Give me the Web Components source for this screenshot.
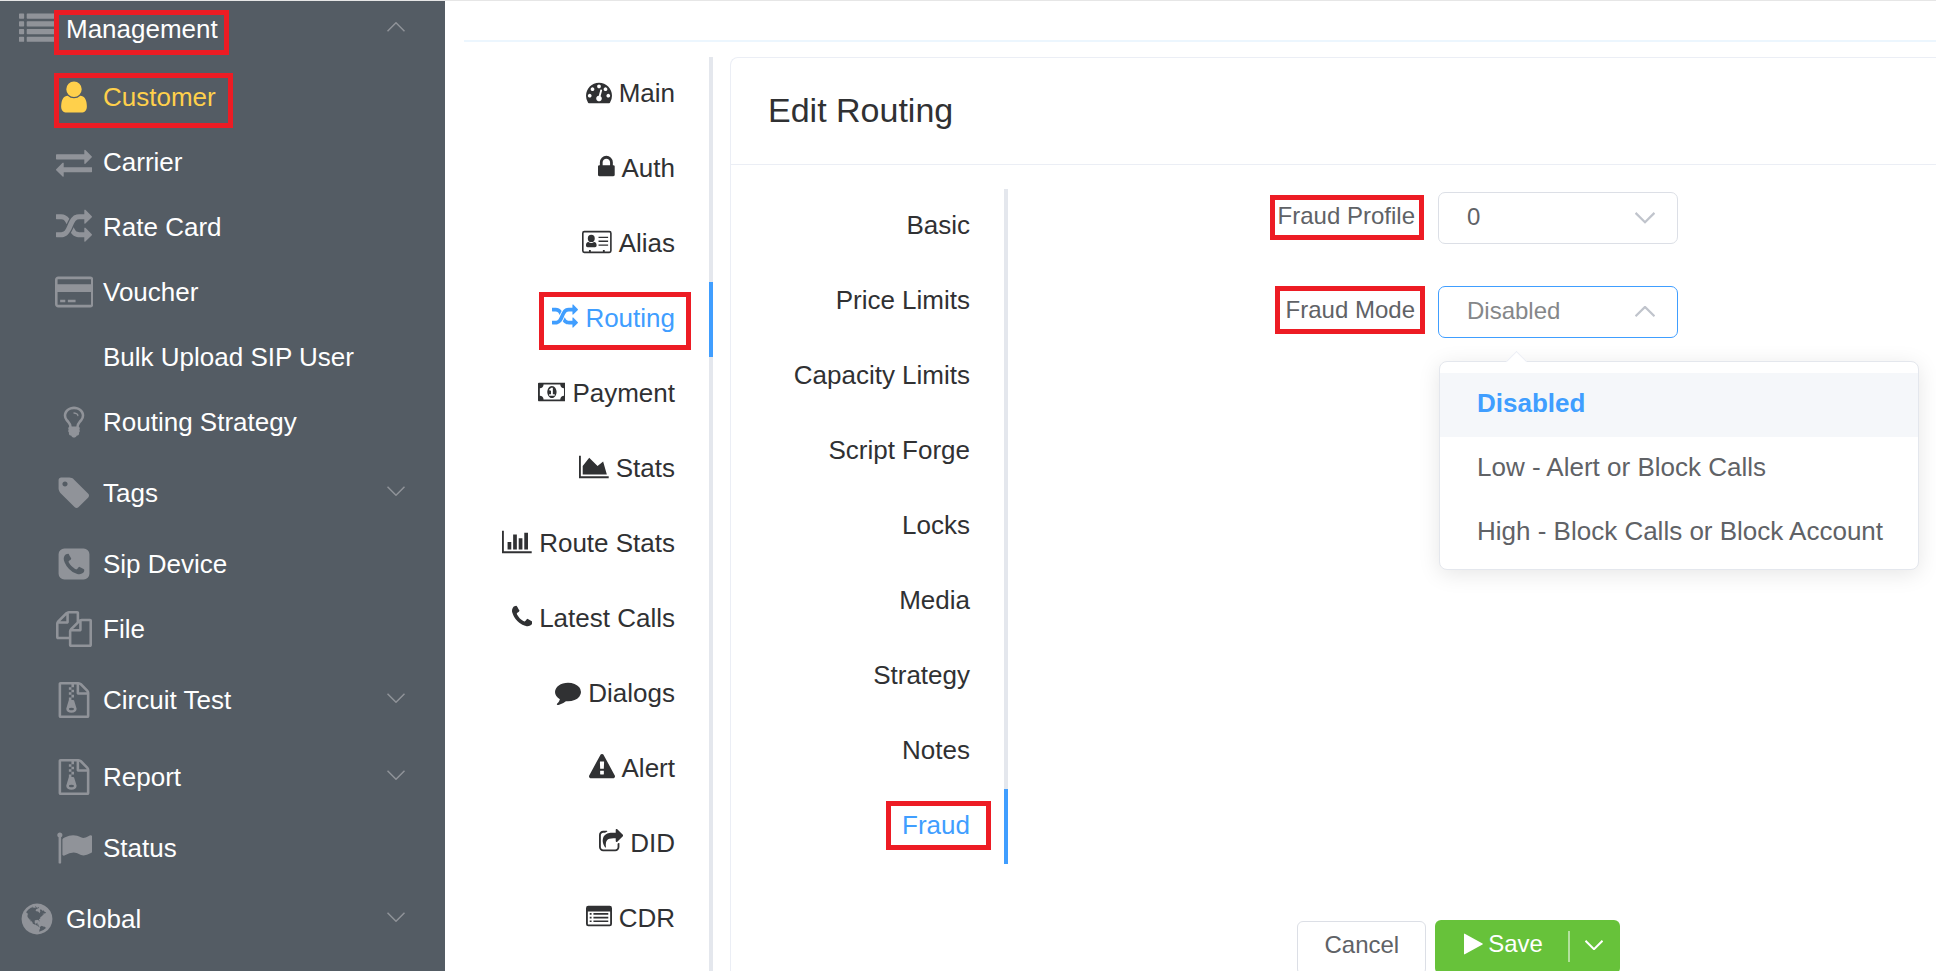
<!DOCTYPE html>
<html lang="en">
<head>
<meta charset="utf-8">
<title>Edit Routing</title>
<style>
  body {
    margin: 0;
    font-family: "Liberation Sans", Arial, sans-serif;
    font-size: 26px;
    color: #303133;
    background: #fff;
    --primary: #409eff;
    --mark: #ed1c24;
    --rule: #e4e7ed;
  }
</style>
</head>
<body>
<app-shell>
  <side-menu slot="side">
    <menu-item level="top" icon="list" arrow="up" mark="management">Management</menu-item>
    <menu-item icon="user" active mark="customer">Customer</menu-item>
    <menu-item icon="exchange">Carrier</menu-item>
    <menu-item icon="random">Rate Card</menu-item>
    <menu-item icon="card">Voucher</menu-item>
    <menu-item>Bulk Upload SIP User</menu-item>
    <menu-item icon="bulb">Routing Strategy</menu-item>
    <menu-item icon="tag" arrow="down">Tags</menu-item>
    <menu-item icon="phone-square">Sip Device</menu-item>
    <menu-item icon="files">File</menu-item>
    <menu-item icon="archive" arrow="down">Circuit Test</menu-item>
    <menu-item icon="archive" arrow="down">Report</menu-item>
    <menu-item icon="flag">Status</menu-item>
    <menu-item level="top" icon="globe" arrow="down">Global</menu-item>
  </side-menu>
  <tab-list slot="tabs" label="Customer">
    <tab-item icon="gauge">Main</tab-item>
    <tab-item icon="lock">Auth</tab-item>
    <tab-item icon="id-card">Alias</tab-item>
    <tab-item icon="random" active mark="wide">Routing</tab-item>
    <tab-item icon="money">Payment</tab-item>
    <tab-item icon="area">Stats</tab-item>
    <tab-item icon="bars">Route Stats</tab-item>
    <tab-item icon="phone">Latest Calls</tab-item>
    <tab-item icon="comment">Dialogs</tab-item>
    <tab-item icon="warning">Alert</tab-item>
    <tab-item icon="share">DID</tab-item>
    <tab-item icon="list-alt">CDR</tab-item>
  </tab-list>
  <edit-card heading="Edit Routing">
    <tab-list slot="tabs" label="Routing">
      <tab-item>Basic</tab-item>
      <tab-item>Price Limits</tab-item>
      <tab-item>Capacity Limits</tab-item>
      <tab-item>Script Forge</tab-item>
      <tab-item>Locks</tab-item>
      <tab-item>Media</tab-item>
      <tab-item>Strategy</tab-item>
      <tab-item>Notes</tab-item>
      <tab-item active mark="narrow">Fraud</tab-item>
    </tab-list>
    <select-field label="Fraud Profile" options="0"></select-field>
    <select-field label="Fraud Mode" open
      options="Disabled|Low - Alert or Block Calls|High - Block Calls or Block Account"></select-field>
    <form-actions slot="footer"></form-actions>
  </edit-card>
</app-shell>

<script>
const ICONS = {
  list: ['0 0 1792 1792', 'M32 128h192q32 0 32 32v192q0 32-32 32h-192q-32 0-32-32v-192q0-32 32-32zM32 512h192q32 0 32 32v192q0 32-32 32h-192q-32 0-32-32v-192q0-32 32-32zM32 896h192q32 0 32 32v192q0 32-32 32h-192q-32 0-32-32v-192q0-32 32-32zM32 1280h192q32 0 32 32v192q0 32-32 32h-192q-32 0-32-32v-192q0-32 32-32zM416 128h1344q32 0 32 32v192q0 32-32 32h-1344q-32 0-32-32v-192q0-32 32-32zM416 512h1344q32 0 32 32v192q0 32-32 32h-1344q-32 0-32-32v-192q0-32 32-32zM416 896h1344q32 0 32 32v192q0 32-32 32h-1344q-32 0-32-32v-192q0-32 32-32zM416 1280h1344q32 0 32 32v192q0 32-32 32h-1344q-32 0-32-32v-192q0-32 32-32z'],
  user: ['0 0 1792 1792', 'M1536 1399q0 109-62.5 187t-150.5 78h-854q-88 0-150.5-78t-62.5-187q0-85 8.5-160.5t31.5-152 58.5-131 94-89 134.5-34.5q131 128 313 128t313-128q76 0 134.5 34.5t94 89 58.5 131 31.5 152 8.5 160.5zm-256-887q0 159-112.5 271.5t-271.5 112.5-271.5-112.5-112.5-271.5 112.5-271.5 271.5-112.5 271.5 112.5 112.5 271.5z'],
  exchange: ['0 0 1792 1792', 'M1792 1184v192q0 13-9.5 22.5t-22.5 9.5h-1376v192q0 13-9.5 22.5t-22.5 9.5q-12 0-24-10l-319-320q-9-9-9-22 0-14 9-23l320-320q9-9 23-9 13 0 22.5 9.5t9.5 22.5v192h1376q13 0 22.5 9.5t9.5 22.5zm0-544q0 14-9 23l-320 320q-9 9-23 9-13 0-22.5-9.5t-9.5-22.5v-192h-1376q-13 0-22.5-9.5t-9.5-22.5v-192q0-13 9.5-22.5t22.5-9.5h1376v-192q0-14 9-23t23-9q12 0 24 10l319 319q9 9 9 23z'],
  random: ['0 0 1792 1792', 'M666 481q-60 92-137 273-22-45-37-72.5t-40.5-63.5-51-56.5-63-35-81.5-14.5h-224q-14 0-23-9t-9-23v-192q0-14 9-23t23-9h224q250 0 410 225zm1126 799q0 14-9 23l-320 320q-9 9-23 9-13 0-22.5-9.5t-9.5-22.5v-192q-32 0-85 .5t-81 1-73-1-71-5-64-10.5-63-18.5-58-28.5-59-40-55-53.5-56-69.5q59-93 136-273 22 45 37 72.5t40.5 63.5 51 56.5 63 35 81.5 14.5h256v-192q0-14 9-23t23-9q12 0 24 10l319 319q9 9 9 23zm0-896q0 14-9 23l-320 320q-9 9-23 9-13 0-22.5-9.5t-9.5-22.5v-192h-256q-48 0-87 15t-69 45-51 61.5-45 77.5q-32 62-78 171-29 66-49.5 111t-54 105-64 100-74 83-90 68.5-106.5 42-128 16.5h-224q-14 0-23-9t-9-23v-192q0-14 9-23t23-9h224q48 0 87-15t69-45 51-61.5 45-77.5q32-62 78-171 29-66 49.5-111t54-105 64-100 74-83 90-68.5 106.5-42 128-16.5h256v-192q0-14 9-23t23-9q12 0 24 10l319 319q9 9 9 23z'],
  card: ['0 0 1920 1792', 'M1760 128q66 0 113 47t47 113v1216q0 66-47 113t-113 47h-1600q-66 0-113-47t-47-113v-1216q0-66 47-113t113-47h1600zm-1600 128q-13 0-22.5 9.5t-9.5 22.5v224h1664v-224q0-13-9.5-22.5t-22.5-9.5h-1600zm1600 1280q13 0 22.5-9.5t9.5-22.5v-608h-1664v608q0 13 9.5 22.5t22.5 9.5h1600zm-1504-128v-128h256v128h-256zm384 0v-128h384v128h-384z'],
  bulb: ['0 0 1792 1792', 'M1120 576q0 13-9.5 22.5t-22.5 9.5-22.5-9.5-9.5-22.5q0-46-54-71t-106-25q-13 0-22.5-9.5t-9.5-22.5 9.5-22.5 22.5-9.5q50 0 99.5 16t87 54 37.5 90zm160 0q0-72-34.5-134t-90-101.5-123-62-136.5-22.5-136.5 22.5-123 62-90 101.5-34.5 134q0 101 68 180 10 11 30.5 33t30.5 33q128 153 141 298h228q13-145 141-298 10-11 30.5-33t30.5-33q68-79 68-180zm128 0q0 155-103 268-45 49-74.5 87t-59.5 95.5-34 107.5q47 28 47 82 0 37-25 64 25 27 25 64 0 52-45 81 13 23 13 47 0 46-31.5 71t-77.5 25q-20 44-60 70t-87 26-87-26-60-70q-46 0-77.5-25t-31.5-71q0-24 13-47-45-29-45-81 0-37 25-64-25-27-25-64 0-54 47-82-4-50-34-107.5t-59.5-95.5-74.5-87q-103-113-103-268 0-99 44.5-184.5t117-142 164-89 186.5-32.5 186.5 32.5 164 89 117 142 44.5 184.5z'],
  tag: ['0 0 1792 1792', 'M576 448q0-53-37.5-90.5t-90.5-37.5-90.5 37.5-37.5 90.5 37.5 90.5 90.5 37.5 90.5-37.5 37.5-90.5zm1067 576q0 53-37 90l-491 492q-39 37-91 37-53 0-90-37l-715-716q-38-37-64.5-101t-26.5-117v-416q0-52 38-90t90-38h416q53 0 117 26.5t102 64.5l715 714q37 39 37 91z'],
  'phone-square': ['0 0 1792 1792', 'M1408 1193q0-11-2-16t-18-16.5-40.5-25-47.5-26.5-45.5-25-28.5-15q-5-3-19-13t-25-15-21-5q-15 0-36.5 20.5t-39.5 45-38.5 45-33.5 20.5q-7 0-16.5-3.5t-15.5-6.5-17-9.5-14-8.5q-99-55-170-126.5t-127-170.5q-2-3-8.5-14t-9.5-17-6.5-15.5-3.5-16.5q0-13 20.5-33.5t45-38.5 45-39.5 20.5-36.5q0-10-5-21t-15-25-13-19q-3-6-15-28.5t-25-45.5-26.5-47.5-25-40.5-16.5-18-16-2q-48 0-101 22-46 21-80 94.5t-34 130.5q0 16 2.5 34t5 30.5 9 33 10 29.5 12.5 33 11 30q60 164 216.5 320.5t320.5 216.5q6 2 30 11t33 12.5 29.5 10 33 9 30.5 5 34 2.5q57 0 130.5-34t94.5-80q22-53 22-101zm256-777v960q0 119-84.5 203.5t-203.5 84.5h-960q-119 0-203.5-84.5t-84.5-203.5v-960q0-119 84.5-203.5t203.5-84.5h960q119 0 203.5 84.5t84.5 203.5z'],
  files: ['0 0 1792 1792', 'M1696 384q40 0 68 28t28 68v1216q0 40-28 68t-68 28h-960q-40 0-68-28t-28-68v-288h-544q-40 0-68-28t-28-68v-672q0-40 20-88t48-76l408-408q28-28 76-48t88-20h416q40 0 68 28t28 68v328q68-40 128-40h416zm-544 213l-299 299h299v-299zm-640-384l-299 299h299v-299zm196 647l316-316v-416h-384v416q0 40-28 68t-68 28h-416v640h512v-256q0-40 20-88t48-76zm956 804v-1152h-384v416q0 40-28 68t-68 28h-416v640h896z'],
  archive: ['0 0 1792 1792', 'M768 384v-128h-128v128h128zm128 128v-128h-128v128h128zm-128 128v-128h-128v128h128zm128 128v-128h-128v128h128zm700-388q28 28 48 76t20 88v1152q0 40-28 68t-68 28h-1344q-40 0-68-28t-28-68v-1600q0-40 28-68t68-28h896q40 0 88 20t76 48zm-444-244v376h376q-10-29-22-41l-313-313q-12-12-41-22zm384 1528v-1024h-416q-40 0-68-28t-28-68v-416h-128v128h-128v-128h-512v1536h1280zm-627-721l107 349q8 27 8 52 0 83-72.5 137.5t-183.5 54.5-183.5-54.5-72.5-137.5q0-25 8-52 21-63 120-396v-128h128v128h79q22 0 39 13t23 34zm-141 465q53 0 90.5-19t37.5-45-37.5-45-90.5-19-90.5 19-37.5 45 37.5 45 90.5 19z'],
  flag: ['0 0 1792 1792', 'M320 256q0 72-64 110v1266q0 13-9.5 22.5t-22.5 9.5h-64q-13 0-22.5-9.5t-9.5-22.5v-1266q-64-38-64-110 0-53 37.5-90.5t90.5-37.5 90.5 37.5 37.5 90.5zm1472 64v763q0 25-12.5 38.5t-39.5 27.5q-215 116-369 116-61 0-123.5-22t-108.5-48-115.5-48-142.5-22q-192 0-464 146-17 9-33 9-26 0-45-19t-19-45v-742q0-32 31-55 21-14 79-43 236-120 421-120 107 0 200 29t219 88q38 19 88 19 54 0 117.5-21t110-47 88-47 54.5-21q26 0 45 19t19 45z'],
  globe: ['0 0 1792 1792', 'M896 128q209 0 385.5 103t279.5 279.5 103 385.5-103 385.5-279.5 279.5-385.5 103-385.5-103-279.5-279.5-103-385.5 103-385.5 279.5-279.5 385.5-103zm274 521q-2 1-9.5 9.5t-13.5 9.5q2 0 4.5-5t5-11 3.5-7q6-7 22-15 14-6 52-12 34-8 51 11-2-2 9.5-13t14.5-12q3-2 15-4.5t15-7.5l2-22q-12 1-17.5-7t-6.5-21q0 2-6 8 0-7-4.5-8t-11.5 1-9 1q-10-3-15-7.5t-8-16.5-4-15q-2-5-9.5-11t-9.5-10q-1-2-2.5-5.5t-3-6.5-4-5.5-5.5-2.5-7 5-7.5 10-4.5 5q-3-2-6-1.5t-4.5 1-4.5 3-5 3.5q-3 2-8.5 3t-8.5 2q15-5-1-11-10-4-16-3 9-4 7.5-12t-8.5-14h5q-1-4-8.5-8.5t-17.5-8.5-13-6q-8-5-34-9.5t-33-.5q-5 6-4.5 10.5t4 14 3.5 12.5q1 6-5.5 13t-6.5 12q0 7 14 15.5t10 21.5q-3 8-16 16t-16 12q-5 8-1.5 18.5t10.5 16.5q2 2 1.5 4t-3.5 4.5-5.5 4-6.5 3.5l-3 2q-11 5-20.5-6t-13.5-26q-7-25-16-30-23-8-29 1-5-13-41-26-25-9-58-4 6-1 0-15-7-15-19-12 3-6 4-17.5t1-13.5q3-13 12-23 1-1 7-8.5t9.5-13.5.5-6q35 4 50-11 5-5 11.5-17t10.5-17q9-6 14-5.5t14.5 5.5 14.5 5q14 1 15.5-11t-7.5-20q12 1 3-17-4-7-8-9-12-4-27 5-8 4 2 8-1-1-9.5 10.5t-16.5 17.5-16-5q-1-1-5.5-13.5t-9.5-13.5q-8 0-16 15 3-8-11-15t-24-8q19-12-8-27-7-4-20.5-5t-19.5 4q-5 7-5.5 11.5t5 8 10.5 5.5 11.5 4 8.5 3q14 10 8 14-2 1-8.5 3.5t-11.5 4.5-6 4q-3 4 0 14t-2 14q-5-5-9-17.5t-7-16.5q7 9-25 6l-10-1q-4 0-16 2t-20.5 1-13.5-8q-4-8 0-20 1-4 4-2-4-3-11-9.5t-10-8.5q-46 15-94 41 6 1 12-1 5-2 13-6.5t10-5.5q34-14 42-7l5-5q14 16 20 25-7-4-30-1-20 6-22 12 7 12 5 18-4-3-11.5-10t-14.5-11-15-5q-16 0-22 1-146 80-235 222 7 7 12 8 4 1 5 9t2.5 11 11.5-3q9 8 3 19 1-1 44 27 19 17 21 21 3 11-10 18-1-2-9-9t-9-4q-3 5 .5 18.5t10.5 12.5q-7 0-9.5 16t-2.5 35.5-1 23.5l2 1q-3 12 5.5 34.5t21.5 19.5q-13 3 20 43 6 8 8 9 3 2 12 7.5t15 10 10 10.5q4 5 10 22.5t14 23.5q-2 6 9.5 20t10.5 23q-1 0-2.5 1t-2.5 1q3 7 15.5 14t15.5 13q1 3 2 10t3 11 8 2q2-20-24-62-15-25-17-29-3-5-5.5-15.5t-4.5-14.5q2 0 6 1.5t8.5 3.5 7.5 4 2 3q-3 7 2 17.5t12 18.5 17 19 12 13q6 6 14 19.5t0 13.5q9 0 20 10t17 20q5 8 8 26t5 24q2 7 8.5 13.5t12.5 9.5l16 8 13 7q5 2 18.5 10.5t21.5 11.5q10 4 16 4t14.5-2.5 13.5-3.5q15-2 29 15t21 21q36 19 55 11-2 1 .5 7.5t8 15.5 9 14.5 5.5 8.5q5 6 18 15t18 15q6-4 7-9-3 8 7 20t18 10q14-3 14-32-31 15-49-18 0-1-2.5-5.5t-4-8.5-2.5-8.5 0-7.5 5-3q9 0 10-3.5t-2-12.5-4-13q-1-8-11-20t-12-15q-5 9-16 8t-16-9q0 1-1.5 5.5t-1.5 6.5q-13 0-15-1 1-3 2.5-17.5t3.5-22.5q1-4 5.5-12t7.5-14.5 4-12.5-4.5-9.5-17.5-2.5q-19 1-26 20-1 3-3 10.5t-5 11.5-9 7q-7 3-24 2t-24-5q-13-8-22.5-29t-9.5-37q0-10 2.5-26.5t3-25-5.5-24.5q3-2 9-9.5t10-10.5q2-1 4.5-1.5t4.5 0 4-1.5 3-6q-1-1-4-3-3-3-4-3 7 3 28.5-1.5t27.5 1.5q15 11 22-2 0-1-2.5-9.5t-.5-13.5q5 27 29 9 3 3 15.5 5t17.5 5q3 2 7 5.5t5.5 4.5 5-.5 8.5-6.5q10 14 12 24 11 40 19 44 7 3 11 2t4.5-9.5 0-14-1.5-12.5l-1-8v-18l-1-8q-15-3-18.5-12t1.5-18.5 15-18.5q1-1 8-3.5t15.5-6.5 12.5-8q21-19 15-35 7 0 11-9-1 0-5-3t-7.5-5-4.5-2q9-5 2-16 5-3 7.5-11t7.5-10q9 12 21 2 8-8 1-16 5-7 20.5-10.5t18.5-9.5q7 2 8-2t1-12 3-12q4-5 15-9t13-5l17-11q3-4 0-4 18 2 31-11 10-11-6-20 3-6-3-9.5t-15-5.5q3-1 11.5-.5t10.5-1.5q15-10-7-16-17-5-43 12zm-163 877q206-36 351-189-3-3-12.5-4.5t-12.5-3.5q-18-7-24-8 1-7-2.5-13t-8-9-12.5-8-11-7q-2-2-7-6t-7-5.5-7.5-4.5-8.5-2-10 1l-3 1q-3 1-5.5 2.5t-5.5 3-4 3 0 2.5q-21-17-36-22-5-1-11-5.5t-10.5-7-10-1.5-11.5 7q-5 5-6 15t-2 13q-7-5 0-17.5t2-18.5q-3-6-10.5-4.5t-12 4.5-11.5 8.5-9 6.5-8.5 5.5-8.5 7.5q-3 4-6 12t-5 11q-2-4-11.5-6.5t-9.5-5.5q2 10 4 35t5 38q7 31-12 48-27 25-29 40-4 22 12 26 0 7-8 20.5t-7 21.5q0 6 2 16z'],
  gauge: ['0 0 1792 1792', 'M384 1152q0-53-37.5-90.5t-90.5-37.5-90.5 37.5-37.5 90.5 37.5 90.5 90.5 37.5 90.5-37.5 37.5-90.5zm192-448q0-53-37.5-90.5t-90.5-37.5-90.5 37.5-37.5 90.5 37.5 90.5 90.5 37.5 90.5-37.5 37.5-90.5zm428 481l101-382q6-26-7.5-48.5t-38.5-29.5-48 6.5-30 39.5l-101 382q-60 5-107 43.5t-63 98.5q-20 77 20 146t117 89 146-20 89-117q16-60-6-117t-72-91zm660-33q0-53-37.5-90.5t-90.5-37.5-90.5 37.5-37.5 90.5 37.5 90.5 90.5 37.5 90.5-37.5 37.5-90.5zm-640-640q0-53-37.5-90.5t-90.5-37.5-90.5 37.5-37.5 90.5 37.5 90.5 90.5 37.5 90.5-37.5 37.5-90.5zm448 192q0-53-37.5-90.5t-90.5-37.5-90.5 37.5-37.5 90.5 37.5 90.5 90.5 37.5 90.5-37.5 37.5-90.5zm320 448q0 261-141 483-19 29-54 29h-1402q-35 0-54-29-141-221-141-483 0-182 71-348t191-286 286-191 348-71 348 71 286 191 191 286 71 348z'],
  lock: ['320 0 1152 1792', 'M640 768h512v-192q0-106-75-181t-181-75-181 75-75 181v192zm832 96v576q0 40-28 68t-68 28h-960q-40 0-68-28t-28-68v-576q0-40 28-68t68-28h32v-192q0-184 132-316t316-132 316 132 132 316v192h32q40 0 68 28t28 68z'],
  'id-card': ['0 0 2048 1792', 'M160 128h1728q160 0 160 160v1216q0 160-160 160h-1728q-160 0-160-160v-1216q0-160 160-160zM160 240q-48 0-48 48v1216q0 48 48 48h320v-96h128v96h832v-96h128v96h320q48 0 48-48v-1216q0-48-48-48zM640 400a240 250 0 1 1 0 500a240 250 0 1 1 0-500zM448 900q90 70 192 70t192-70q176 20 176 240q0 112-112 112h-512q-112 0-112-112q0-220 176-240zM1140 530h660v90h-660zM1140 800h660v90h-660zM1140 1070h660v90h-660z'],
  money: ['-64 0 1920 1792', 'M704 1152h384v-96h-128v-448h-114l-148 137 77 80q42-37 55-57h2v288h-128v96zm512-256q0 70-21 142t-59.5 134-101.5 101-138 39-138-39-101.5-101-59.5-134-21-142 21-142 59.5-134 101.5-101 138-39 138 39 101.5 101 59.5 134 21 142zm512 256v-512q-106 0-181-75t-75-181h-1152q0 106-75 181t-181 75v512q106 0 181 75t75 181h1152q0-106 75-181t181-75zm128-832v1152q0 26-19 45t-45 19h-1792q-26 0-45-19t-19-45v-1152q0-26 19-45t45-19h1792q26 0 45 19t19 45z'],
  area: ['0 0 2048 1792', 'M2048 1536v128h-2048v-1536h128v1408h1920zm-384-1024l256 896h-1664v-576l448-576 576 576z'],
  bars: ['0 0 2048 1792', 'M640 896v512h-256v-512h256zm384-512v1024h-256v-1024h256zm1024 1152v128h-2048v-1536h128v1408h1920zm-640-896v768h-256v-768h256zm384-384v1152h-256v-1152h256z'],
  phone: ['192 0 1408 1792', 'M1600 1240q0 27-10 70.5t-21 68.5q-21 50-122 106-94 51-186 51-27 0-52.5-3.5t-57.5-12.5-47.5-14.5-55.5-20.5-49-18q-98-35-175-83-128-79-264.5-215.5t-215.5-264.5q-48-77-83-175-3-9-18-49t-20.5-55.5-14.5-47.5-12.5-57.5-3.5-52.5q0-92 51-186 56-101 106-122 25-11 68.5-21t70.5-10q14 0 21 3 18 6 53 76 11 19 30 54t35 63.5 31 53.5q3 4 17.5 25t21.5 35.5 7 28.5q0 20-28.5 50t-62 55-62 53-28.5 46q0 9 5 22.5t8.5 20.5 14 24 11.5 19q76 137 174 235t235 174q2 1 19 11.5t24 14 20.5 8.5 22.5 5q18 0 46-28.5t53-62 55-62 50-28.5q14 0 28.5 7t35.5 21.5 25 17.5q25 15 53.5 31t63.5 35 54 30q70 35 76 53 3 7 3 21z'],
  comment: ['0 0 1792 1792', 'M1792 896q0 174-120 321.5t-326 233-450 85.5q-70 0-145-8-198 175-460 242-49 14-114 22-17 2-30.5-9t-17.5-29v-1q-3-4-.5-12t2-10 4.5-9.5l6-9 7-8.5 8-9q7-8 31-34.5t34.5-38 31-39.5 32.5-51 27-59 26-76q-157-89-247.5-220t-90.5-281q0-130 71-248.5t191-204.5 286-136.5 348-50.5q244 0 450 85.5t326 233 120 321.5z'],
  warning: ['0 0 1792 1792', 'M1024 1375v-190q0-14-9.5-23.5t-22.5-9.5h-192q-13 0-22.5 9.5t-9.5 23.5v190q0 14 9.5 23.5t22.5 9.5h192q13 0 22.5-9.5t9.5-23.5zm-2-374l18-459q0-12-10-19-13-11-24-11h-220q-11 0-24 11-10 7-10 21l17 457q0 10 10 16.5t24 6.5h185q14 0 23.5-6.5t10.5-16.5zm-14-934l768 1408q35 63-2 126-17 29-46.5 46t-63.5 17h-1536q-34 0-63.5-17t-46.5-46q-37-63-2-126l768-1408q17-31 47-49t65-18 65 18 47 49z'],
  share: ['64 0 1664 1792', 'M1472 989v259q0 119-84.5 203.5t-203.5 84.5h-832q-119 0-203.5-84.5t-84.5-203.5v-832q0-119 84.5-203.5t203.5-84.5h255q13 0 22.5 9.5t9.5 22.5q0 27-26 32-77 26-133 60-10 4-16 4h-112q-66 0-113 47t-47 113v832q0 66 47 113t113 47h832q66 0 113-47t47-113v-214q0-19 18-29 28-13 54-37 16-16 35-8 21 9 21 29zm237-496l-384 384q-18 19-45 19-12 0-25-5-39-17-39-59v-192h-160q-323 0-438 131-119 137-74 473 3 23-20 34-8 2-12 2-16 0-26-13-10-14-21-31t-39.5-68.5-49.5-99.5-38.5-114-17.5-122q0-49 3.5-91t14-90 28-88 47-81.5 68.5-74 94.5-61.5 124.5-48.5 159.5-30.5 196.5-11h160v-192q0-42 39-59 13-5 25-5 26 0 45 19l384 384q19 19 19 45t-19 45z'],
  'list-alt': ['0 0 1792 1792', 'M160 128h1472q160 0 160 160v1088q0 160-160 160h-1472q-160 0-160-160v-1088q0-160 160-160zM128 512v864q0 32 32 32h1472q32 0 32-32v-864zM256 624h128v112h-128zM512 624h1024v112h-1024zM256 880h128v112h-128zM512 880h1024v112h-1024zM256 1136h128v112h-128zM512 1136h1024v112h-1024z'],
  play: ['192 0 1408 1792', 'M1576 927l-1328 738q-23 13-39.5 3t-16.5-36v-1472q0-26 16.5-36t39.5 3l1328 738q23 13 23 31t-23 31z']
};

function define(name, render) {
  customElements.define(name, class extends HTMLElement {
    connectedCallback() {
      if (this.shadowRoot) return;
      this.attachShadow({ mode: 'open' }).innerHTML = render(this);
    }
  });
}

/* Solid glyph, one em high */
define('ui-icon', el => {
  const [box, path] = ICONS[el.getAttribute('name')];
  return `<style>
    :host { display: inline-flex; flex: none; }
    svg { display: block; height: 1em; fill: currentColor; fill-rule: evenodd; }
  </style><svg viewBox="${box}" aria-hidden="true"><path d="${path}"/></svg>`;
});

/* Thin arrow, up or down */
define('ui-chevron', el => `<style>
    :host { display: inline-flex; flex: none; width: 18px; }
    svg { width: 100%; fill: none; stroke: currentColor; stroke-width: var(--stroke, 1.5); }
  </style><svg viewBox="0 0 18 10" aria-hidden="true"><path d="${
    el.getAttribute('dir') === 'up' ? 'M.5 9.2 9 .8l8.500 8.400' : 'M.5 .8 9 9.200l8.500-8.400'}"/></svg>`);

define('app-shell', () => `<style>
    :host { display: flex; box-sizing: border-box; height: 100vh; padding-bottom: 5px;
      border-top: 1px solid #e6e6e6; overflow: hidden; }
    .side { flex: none; width: 445px; background: #545c64; overflow: hidden; }
    main { flex: 1; min-width: 0; display: flex; flex-direction: column; padding-left: 19px;
      overflow: hidden; }
    .bar { flex: none; height: 39px; border-bottom: 2px solid #ecf6fe; margin-bottom: 15px; }
    .cols { flex: 1; min-height: 0; display: flex; gap: 17px; }
    .tabs { flex: none; width: 249px; display: flex; }
    .card { flex: 1; min-width: 0; }
  </style>
  <aside class="side"><slot name="side"></slot></aside>
  <main><div class="bar"></div>
    <div class="cols"><div class="tabs"><slot name="tabs"></slot></div>
    <div class="card"><slot></slot></div></div>
  </main>`);

define('side-menu', () => `<style>
    :host { display: block; }
    nav { display: flex; flex-direction: column; }
  </style><nav aria-label="Main menu"><slot></slot></nav>`);

define('menu-item', el => {
  const icon = el.getAttribute('icon'), arrow = el.getAttribute('arrow');
  return `<style>
    :host { display: block; position: relative; --h: 65px; --indent: 55px; }
    :host([arrow]) { --h: 77px; }
    :host([level=top]) { --indent: 18px; }
    :host([arrow=up]) { --h: 56px; margin-bottom: 7px; }
    a { display: flex; align-items: center; height: var(--h); padding: 0 40px 0 var(--indent);
      color: #fff; text-decoration: none; line-height: 30px; white-space: nowrap; }
    .cell { flex: none; width: 38px; margin-right: 10px; display: flex; justify-content: center;
      font-size: 36px; color: #909399; }
    ui-chevron { margin: 0 0 4px auto; color: #909399; }
    :host([active]) a, :host([active]) .cell { color: #ffd04b; }
    .mark { position: absolute; box-sizing: border-box; border: 5px solid var(--mark); left: 54px; }
    .management { top: 9px; width: 175px; height: 45px; }
    .customer { top: 9px; width: 179px; height: 55px; }
  </style>
  <a href="#"><span class="cell">${icon ? `<ui-icon name="${icon}"></ui-icon>` : ''}</span>
    <span><slot></slot></span>${arrow ? `<ui-chevron dir="${arrow}"></ui-chevron>` : ''}</a>
  ${el.hasAttribute('mark') ? `<div class="mark ${el.getAttribute('mark')}"></div>` : ''}`;
});

define('tab-list', el => `<style>
    :host { display: block; flex: 1; border-right: 4px solid var(--rule); }
    div { display: flex; flex-direction: column; margin-right: -4px; }
  </style><div role="navigation" aria-label="${el.getAttribute('label')} sections"><slot></slot></div>`);

define('tab-item', el => {
  const icon = el.getAttribute('icon');
  return `<style>
    :host { display: block; position: relative; }
    a { display: flex; align-items: center; justify-content: flex-end; gap: 7px; height: 75px;
      box-sizing: border-box; padding: 0 34px 3px 0; border-right: 4px solid transparent;
      color: #303133; text-decoration: none; line-height: 30px; white-space: nowrap; }
    ui-icon { margin-bottom: 2px; }
    :host([active]) a { color: var(--primary); border-color: var(--primary); }
    .mark { position: absolute; box-sizing: border-box; border: 5px solid var(--mark); }
    .wide { top: 10px; right: 22px; width: 152px; height: 58px; }
    .narrow { top: 12px; right: 17px; width: 105px; height: 49px; }
  </style>
  <a href="#">${icon ? `<ui-icon name="${icon}"></ui-icon>` : ''}<span><slot></slot></span></a>
  ${el.hasAttribute('mark') ? `<div class="mark ${el.getAttribute('mark')}"></div>` : ''}`;
});

define('edit-card', el => `<style>
    :host { display: block; box-sizing: border-box; height: 100%;
      border: solid #ebeef5; border-width: 1px 0 0 1px; border-radius: 8px 0 0 0; }
    h1 { margin: 0; padding: 33px 37px 34px; font-size: 34px; font-weight: 400; line-height: 39px;
      border-bottom: 1px solid #ebeef5; }
    .body { display: flex; padding-top: 24px; }
    .tabs { flex: none; width: 277px; display: flex; }
    .form { flex: 1; min-width: 0; display: flex; flex-direction: column; gap: 42px; padding-top: 3px; }
    footer { padding: 56px 0 0 47%; }
  </style>
  <h1>${el.getAttribute('heading')}</h1>
  <div class="body"><div class="tabs"><slot name="tabs"></slot></div>
    <div class="form"><slot></slot></div></div>
  <footer><slot name="footer"></slot></footer>`);

define('select-field', el => {
  const options = el.getAttribute('options').split('|'), open = el.hasAttribute('open');
  return `<style>
    :host { display: grid; grid-template-columns: 430fr 240fr 258fr; align-items: center;
      font-size: 24px; color: #606266; }
    .label { justify-self: end; position: relative; padding-right: 23px; line-height: 28px;
      margin-bottom: 4px; }
    .mark { position: absolute; box-sizing: border-box; border: 5px solid var(--mark);
      top: -7px; right: 14px; width: 154px; height: 45px; }
    :host([open]) .mark { top: -10px; right: 13px; width: 150px; height: 48px; }
    .box { position: relative; display: grid; align-items: center; }
    select { grid-area: 1/1; appearance: none; box-sizing: border-box; width: 100%; height: 52px;
      margin: 0; padding: 0 60px 4px 28px; border: 1px solid #dcdfe6; border-radius: 7px;
      background: #fff; font: inherit; color: inherit; }
    :host([open]) select { border-color: var(--primary); color: #858789; }
    ui-chevron { grid-area: 1/1; justify-self: end; width: 20px; margin-right: 23px;
      color: #c0c4cc; pointer-events: none; --stroke: 2; }
    .menu { position: absolute; top: 75px; left: 1px; box-sizing: border-box; width: 480px;
      margin: 0; padding: 11px 0 4px; list-style: none; font-size: 26px; color: #606266;
      background: #fff; border: 1px solid var(--rule); border-radius: 8px;
      box-shadow: 0 4px 22px rgba(0,0,0,.1); }
    .menu::before { content: ""; position: absolute; top: -8px; left: 69px; width: 14px; height: 14px;
      background: #fff; border: solid #ebeef5; border-width: 1px 0 0 1px; transform: rotate(45deg); }
    li { position: relative; padding: 0 22px 4px 37px; line-height: 60px; white-space: nowrap; }
    li[aria-selected=true] { color: var(--primary); font-weight: 700; background: #f5f7fa; }
  </style>
  <div class="label"><label for="field">${el.getAttribute('label')}</label><div class="mark"></div></div>
  <div class="box">
    <select id="field">${options.map(o => `<option>${o}</option>`).join('')}</select>
    <ui-chevron dir="${open ? 'up' : 'down'}"></ui-chevron>
    ${open ? `<ul class="menu" role="listbox">${options.map((o, i) =>
      `<li role="option" aria-selected="${i === 0}">${o}</li>`).join('')}</ul>` : ''}
  </div>`;
});

define('form-actions', () => `<style>
    :host { display: flex; gap: 9px; align-items: flex-start; }
    button { box-sizing: border-box; height: 54px; margin: 0; font: inherit; font-size: 24px;
      line-height: 28px; border: 0; cursor: pointer; }
    .cancel { width: 129px; margin-top: 1px; padding: 0 0 6px; color: #606266; background: #fff;
      border: 1px solid #dcdfe6; border-radius: 6px; }
    .group { display: flex; height: 54px; color: #fff; background: #67c23a; border-radius: 6px; }
    .group button { display: flex; align-items: center; color: #fff; background: none; }
    .save { gap: 5px; width: 133px; padding: 0 0 6px 29px; }
    .more { width: 52px; padding: 0 0 4px; position: relative; justify-content: center; --stroke: 2; }
    .more::before { content: ""; position: absolute; left: 0; top: 11px; width: 2px; height: 31px;
      background: rgba(255,255,255,.5); }
  </style>
  <button class="cancel" type="button">Cancel</button>
  <div class="group"><button class="save" type="submit"><ui-icon name="play"></ui-icon>Save</button>
    <button class="more" type="button" aria-label="More save options"><ui-chevron dir="down"></ui-chevron></button></div>`);
</script>
</body>
</html>
